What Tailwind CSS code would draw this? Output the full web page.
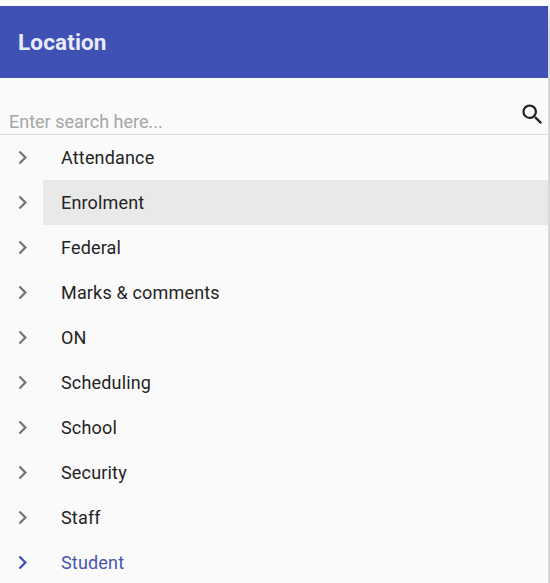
<!DOCTYPE html>
<html lang="en"><head><meta charset="utf-8"><title>Location</title>
<script src="https://cdn.jsdelivr.net/npm/@tailwindcss/browser@4"></script></head>
<body class="w-[550px] h-[583px] overflow-hidden bg-[#fafafa] font-[Roboto,sans-serif] text-[#212121]">
<div class="h-[583px] pt-[6px] flex">
<main class="w-[548px] h-[577px] bg-[#fafafa]">
<header class="h-[72px] bg-[#3f51b5] flex items-center pl-[18px] pt-[1px]"><h1 class="text-[22.5px] font-bold tracking-[0.13px] text-[#e8eaf6]">Location</h1></header>
<div class="h-[57px] border-b border-[#dcdcdc] flex items-end justify-between pl-[9px] pr-[2px]">
<span class="text-[18px] leading-[25px] text-[#a6a6a6]">Enter search here...</span>
<svg class="size-[27px] mb-[6px]" viewBox="0 0 24 24" fill="#212121"><path d="M15.5 14h-.79l-.28-.27A6.471 6.471 0 0 0 16 9.500 6.500 6.500 0 1 0 9.500 16c1.610 0 3.090-.59 4.230-1.570l.27.28v.79l5 4.990L20.490 19l-4.990-5zm-6 0C7.010 14 5 11.990 5 9.500S7.010 5 9.500 5 14 7.010 14 9.500 11.990 14 9.500 14z"/></svg>
</div>
<ul id="tree"></ul>
</main>
<div class="w-[2px] h-[577px] bg-linear-to-b from-[#f0f0f0] to-[#d9d9d9] to-[24px]"></div>
</div>
<script>
document.getElementById('tree').innerHTML = ['Attendance','Enrolment','Federal','Marks &amp; comments','ON','Scheduling','School','Security','Staff','Student'].map(t =>
`<li class="h-[45px] flex"><span class="w-[43px] flex items-center pl-[9px] ${t==='Student'?'text-[#3f51b5]':'text-[#757575]'}"><svg class="size-[27px]" viewBox="0 0 24 24" fill="currentColor"><path d="M10 6 8.590 7.410 13.170 12l-4.580 4.590L10 18l6-6z"/></svg></span><span class="flex-1 flex items-center pl-[18px] text-[18px] tracking-[0.17px] ${t==='Student'?'text-[#4956ae]':'text-[#242424]'} ${t==='Enrolment'?'bg-[#e9e9e9]':''}">${t}</span></li>`).join('');
</script>
</body></html>
